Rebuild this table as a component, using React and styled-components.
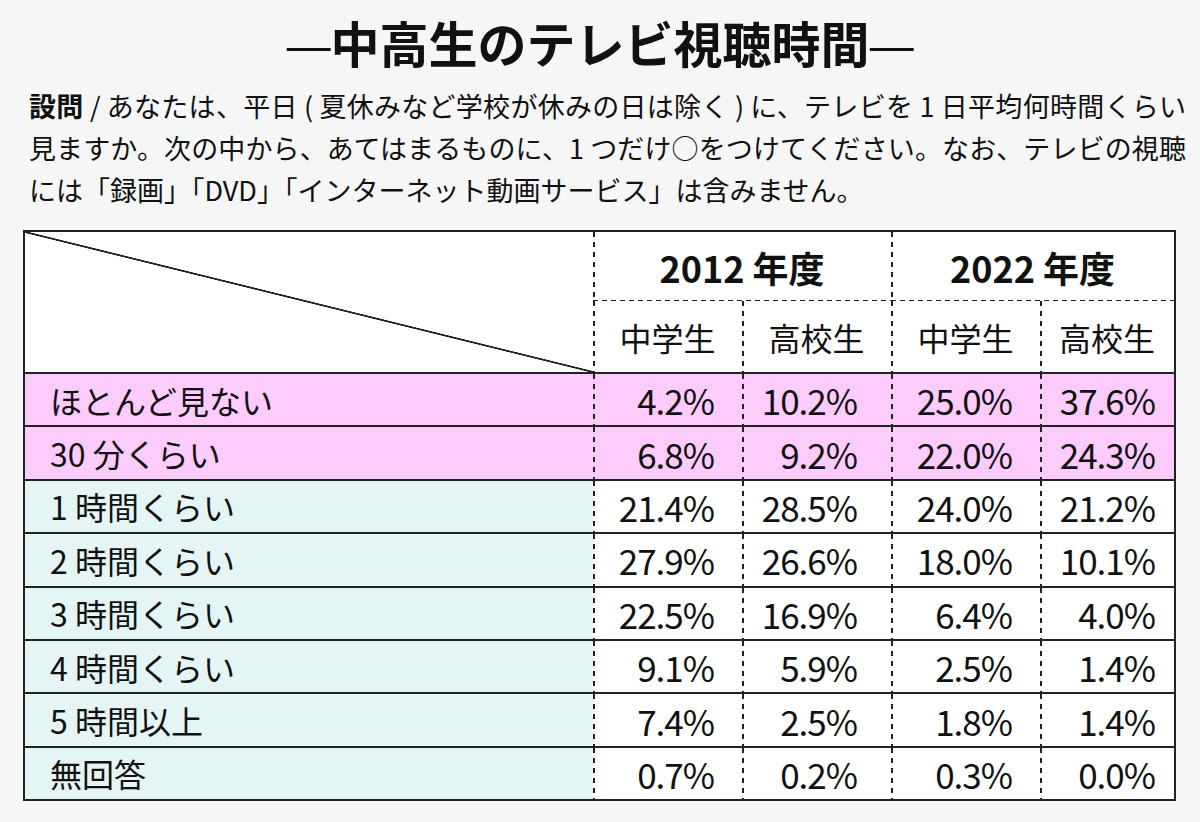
import React from "react";
import styled, { createGlobalStyle } from "styled-components";

const GlobalStyle = createGlobalStyle`
  body {
    margin: 0;
    background: #f6f6f6;
    color: #111111;
    font-family: "Noto Sans CJK JP", "Noto Sans", sans-serif;
  }
`;

const LINE = "#222222";

const vDash = `linear-gradient(to bottom, ${LINE} 55%, transparent 55%)`;
const hDash = `linear-gradient(to right, ${LINE} 55%, transparent 55%)`;

const TONES = {
  pink: "#fecbfd",
  cyan: "#e3f6f5",
  white: "#ffffff",
};

const Page = styled.div`
  width: 1200px;
  padding-top: 14px;
`;

const Title = styled.h1`
  margin: 0;
  text-align: center;
  font-size: 49px;
  font-weight: 700;
  line-height: 56px;
  letter-spacing: 0;
`;

const Dash = styled.span`
  font-weight: 400;
  display: inline-block;
  transform: scaleX(1.12);
`;

const Question = styled.div`
  margin: 15px 0 0 29px;
  width: 1157px;
  font-size: 27px;
  line-height: 42px;
`;

const QuestionLine = styled.span`
  display: block;
  white-space: nowrap;
  text-align: left;
  text-align-last: ${(p) => (p.$justify ? "justify" : "auto")};
`;

const Lead = styled.b`
  font-weight: 700;
`;

const Table = styled.div`
  margin: 19px 0 0 23px;
  width: 1153px;
  box-sizing: border-box;
  border: 2px solid ${LINE};
  background: #ffffff;
  display: grid;
  grid-template-columns: 568px 149px 149px 149px 134px;
`;

const Corner = styled.div`
  grid-row: span 2;
  background: linear-gradient(
    to top right,
    transparent calc(50% - 1.2px),
    ${LINE} calc(50% - 0.6px),
    ${LINE} calc(50% + 0.6px),
    transparent calc(50% + 1.2px)
  );
`;

const YearCell = styled.div`
  grid-column: span 2;
  height: 69px;
  display: flex;
  align-items: center;
  justify-content: center;
  font-size: 36px;
  font-weight: 700;
  background-image: ${vDash}, ${hDash};
  background-size: 1.5px 10px, 9px 1.5px;
  background-repeat: repeat-y, repeat-x;
  background-position: left top, left bottom;
`;

const GroupCell = styled.div`
  height: 71px;
  display: flex;
  align-items: center;
  justify-content: center;
  font-size: 32px;
  background-image: ${vDash};
  background-size: 1.5px 10px;
  background-repeat: repeat-y;
  background-position: left top;
`;

const LabelCell = styled.div`
  box-sizing: border-box;
  height: 53.4px;
  border-top: 2px solid ${LINE};
  padding-left: 25px;
  display: flex;
  align-items: center;
  font-size: 32px;
  background-color: ${(p) => TONES[p.$tone]};
`;

const ValueCell = styled.div`
  box-sizing: border-box;
  height: 53.4px;
  border-top: 2px solid ${LINE};
  padding-right: ${(p) => p.$pad}px;
  display: flex;
  align-items: center;
  justify-content: flex-end;
  font-size: 35px;
  letter-spacing: -1px;
  background-color: ${(p) => TONES[p.$tone]};
  background-image: ${vDash};
  background-size: 1.5px 10px;
  background-repeat: repeat-y;
  background-position: left top;
`;

const PADS = [28, 34, 28, 19];

const rows = [
  { label: "ほとんど見ない", tone: "pink", values: ["4.2%", "10.2%", "25.0%", "37.6%"] },
  { label: "30 分くらい", tone: "pink", values: ["6.8%", "9.2%", "22.0%", "24.3%"] },
  { label: "1 時間くらい", tone: "cyan", values: ["21.4%", "28.5%", "24.0%", "21.2%"] },
  { label: "2 時間くらい", tone: "cyan", values: ["27.9%", "26.6%", "18.0%", "10.1%"] },
  { label: "3 時間くらい", tone: "cyan", values: ["22.5%", "16.9%", "6.4%", "4.0%"] },
  { label: "4 時間くらい", tone: "cyan", values: ["9.1%", "5.9%", "2.5%", "1.4%"] },
  { label: "5 時間以上", tone: "cyan", values: ["7.4%", "2.5%", "1.8%", "1.4%"] },
  { label: "無回答", tone: "cyan", values: ["0.7%", "0.2%", "0.3%", "0.0%"] },
];

export default function App() {
  return (
    <Page>
      <GlobalStyle />
      <Title>
        <Dash>—</Dash>中高生のテレビ視聴時間<Dash>—</Dash>
      </Title>
      <Question>
        <QuestionLine $justify>
          <Lead>設問</Lead> / あなたは、平日 ( 夏休みなど学校が休みの日は除く ) に、テレビを 1 日平均何時間くらい
        </QuestionLine>
        <QuestionLine $justify>
          見ますか。次の中から、あてはまるものに、1 つだけ○をつけてください。なお、テレビの視聴
        </QuestionLine>
        <QuestionLine>
          には「録画」「DVD」「インターネット動画サービス」は含みません。
        </QuestionLine>
      </Question>

      <Table>
        <Corner />
        <YearCell>2012 年度</YearCell>
        <YearCell>2022 年度</YearCell>
        <GroupCell>中学生</GroupCell>
        <GroupCell>高校生</GroupCell>
        <GroupCell>中学生</GroupCell>
        <GroupCell>高校生</GroupCell>
        {rows.map((row) => (
          <React.Fragment key={row.label}>
            <LabelCell $tone={row.tone}>{row.label}</LabelCell>
            {row.values.map((v, i) => (
              <ValueCell key={i} $tone={row.tone === "pink" ? "pink" : "white"} $pad={PADS[i]}>
                {v}
              </ValueCell>
            ))}
          </React.Fragment>
        ))}
      </Table>
    </Page>
  );
}
